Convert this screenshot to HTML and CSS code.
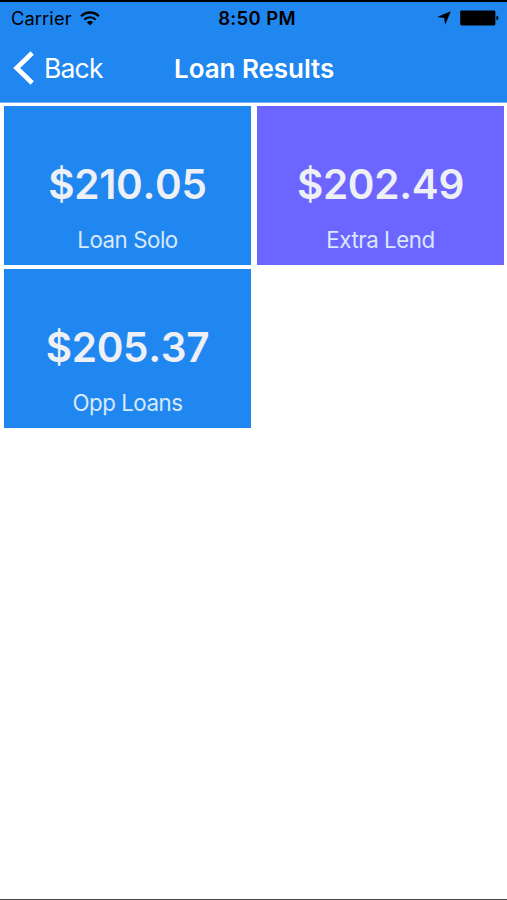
FILE: index.html
```html
<!DOCTYPE html>
<html lang="en">
<head>
<meta charset="utf-8">
<title>Loan Results</title>
<link rel="stylesheet" href="styles.css">
</head>
<body>
<div class="screen">
  <header class="header">
    <div class="status">
      <div class="status-left">
        <span class="carrier">Carrier</span>
        <svg class="wifi" width="20" height="15" viewBox="0 0 20 15">
          <path d="M1.1 5.2a12.6 12.6 0 0 1 17.8 0" fill="none" stroke="#000" stroke-width="2.3"/>
          <path d="M4.3 8.7a8 8 0 0 1 11.4 0" fill="none" stroke="#000" stroke-width="2.1"/>
          <path d="M10 14.6 6.8 11.3a4.5 4.5 0 0 1 6.4 0z"/>
        </svg>
      </div>
      <span class="time">8:50 PM</span>
      <div class="status-right">
        <svg width="14" height="14" viewBox="0 0 14 14"><path d="M13.8.2 8.2 13.8 7.2 7 .2 6z"/></svg>
        <svg class="battery" width="39" height="16" viewBox="0 0 39 16"><rect x=".2" y=".4" width="35.2" height="15" rx="1.3"/><path d="M36.5 5.5c2.5.7 2.5 4.3 0 5z"/></svg>
      </div>
    </div>
    <nav class="nav">
      <a class="back"><svg width="22" height="34" viewBox="0 0 22 34"><path d="M19.2 2 3.7 17l15.5 15" fill="none" stroke="#fff" stroke-width="4.8"/></svg><span>Back</span></a>
      <h1 class="title">Loan Results</h1>
    </nav>
  </header>
  <main class="grid">
    <section class="card"><div class="amount">$210.05</div><div class="lender">Loan Solo</div></section>
    <section class="card violet"><div class="amount">$202.49</div><div class="lender">Extra Lend</div></section>
    <section class="card"><div class="amount">$205.37</div><div class="lender">Opp Loans</div></section>
  </main>
</div>
</body>
</html>
```
FILE: styles.css
```css
* { box-sizing: border-box; }
body { margin: 0; background: #fff; font-family: Inter, "Liberation Sans", sans-serif; }
svg { display: block; flex: none; }
.screen { height: 900px; border-top: 2px solid #000; border-bottom: 1px solid #48484a; }
.header { height: 101px; background: #2087f0; border-bottom: 1px solid #77b4f3; }
.status { display: grid; grid-template-columns: 1fr auto 1fr; height: 32px; padding: 0 8px 0 11px; align-items: center; color: #000; }
.status-left, .status-right { display: flex; align-items: center; }
.status-right { justify-content: flex-end; gap: 9px; }
.carrier { width: 69px; font-size: 18.3px; letter-spacing: .1px; }
.time { padding-left: 4px; font-size: 18.5px; font-weight: 600; letter-spacing: .35px; }
.nav { display: grid; grid-template-columns: 174px 1fr; height: 68px; align-items: center; color: #fff; }
.back { display: flex; align-items: center; gap: 9px; padding-left: 13px; font-size: 26.5px; letter-spacing: -.8px; }
.title { margin: 1px 0 0; font-size: 26px; font-weight: 600; line-height: 34px; white-space: nowrap; letter-spacing: -.05px; }
.grid { display: grid; grid-template-columns: 247px 247px; grid-auto-rows: 159px; gap: 4px 6px; padding: 3px 3px 3px 4px; }
.card { padding-top: 53px; background: #2087f0; text-align: center; }
.violet { background: #6d65ff; }
.amount { height: 52px; line-height: 52px; font-size: 40.5px; font-weight: 570; font-kerning: none; letter-spacing: -.3px; color: #eef0f6; white-space: nowrap; }
.lender { margin-top: 15px; line-height: 28px; font-size: 22.3px; letter-spacing: -.45px; color: #d8e9fb; }
```
